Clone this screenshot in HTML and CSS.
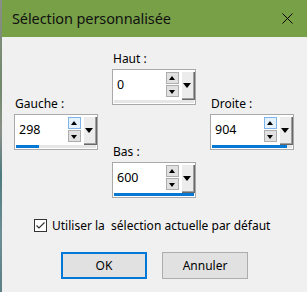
FILE: index.html
```html
<!DOCTYPE html>
<html lang="fr">
<head>
<meta charset="utf-8">
<title>Sélection personnalisée</title>
<link rel="stylesheet" href="styles.css">
</head>
<body>
<div class="desk">
  <div class="strip"></div>
  <div class="win">
    <div class="titlebar">
      <span class="title">Sélection personnalisée</span>
      <svg class="close" width="11" height="11" viewBox="0 0 11 11"><path d="M0.5 0.5 L10.5 10.5 M10.5 0.5 L0.5 10.5" stroke="#000" stroke-width="1" fill="none"/></svg>
    </div>
    <div class="body">
      <div class="fields">
        <div class="col side">
          <div class="field">
            <div class="label">Gauche :</div>
            <div class="box">
              <div class="row">
                <span class="value">298</span>
                <div class="spin"><span class="sb up hot"></span><span class="sb down"></span></div>
                <span class="drop"></span>
              </div>
              <div class="track"><div class="fill" style="width:29%"></div></div>
            </div>
          </div>
        </div>
        <div class="col mid">
          <div class="field">
            <div class="label">Haut :</div>
            <div class="box">
              <div class="row">
                <span class="value">0</span>
                <div class="spin"><span class="sb up"></span><span class="sb down"></span></div>
                <span class="drop"></span>
              </div>
              <div class="track"><div class="fill" style="width:0%"></div></div>
            </div>
          </div>
          <div class="field">
            <div class="label">Bas :</div>
            <div class="box">
              <div class="row">
                <span class="value">600</span>
                <div class="spin"><span class="sb up"></span><span class="sb down"></span></div>
                <span class="drop"></span>
              </div>
              <div class="track"><div class="fill" style="width:100%"></div></div>
            </div>
          </div>
        </div>
        <div class="col side">
          <div class="field">
            <div class="label">Droite :</div>
            <div class="box">
              <div class="row">
                <span class="value">904</span>
                <div class="spin"><span class="sb up hot"></span><span class="sb down"></span></div>
                <span class="drop"></span>
              </div>
              <div class="track"><div class="fill" style="width:94%"></div></div>
            </div>
          </div>
        </div>
      </div>
      <div class="check">
        <svg class="cbox" width="13" height="13" viewBox="0 0 13 13"><rect x="0.5" y="0.5" width="12" height="12" fill="#fff" stroke="#333"/><path d="M2.5 6.5 L5 9 L10.5 3.5" stroke="#333" stroke-width="1.2" fill="none"/></svg>
        <span class="ctext">Utiliser la&nbsp; sélection actuelle par défaut</span>
      </div>
      <div class="buttons">
        <button class="btn default">OK</button>
        <button class="btn">Annuler</button>
      </div>
    </div>
  </div>
</div>
</body>
</html>
```

FILE: styles.css
```css
* { box-sizing: border-box; }
html, body { margin: 0; padding: 0; }
body {
  font-family: "Noto Sans", "Open Sans", sans-serif;
  font-size: 12px;
  color: #000;
  background: #f0f0f0;
}
.desk { display: flex; width: 307px; height: 292px; overflow: hidden; }
.strip {
  width: 2px;
  flex: none;
  background: linear-gradient(to bottom, #8a8f86 0%, #6f8a6a 30%, #8c9088 45%, #4d7c80 60%, #6d8f96 80%, #5c7f86 100%);
}
.win { flex: 1; background: #f0f0f0; display: flex; flex-direction: column; }
.titlebar {
  height: 37px;
  background: #77a047;
  display: flex;
  align-items: center;
  justify-content: space-between;
  padding: 0 14px 0 10px;
}
.title { font-size: 14.5px; color: #111; letter-spacing: -0.1px; padding-bottom: 1px; }
.close { display: block; }
.body { padding: 14px 0 0 12px; display: flex; flex-direction: column; }
.fields { display: flex; gap: 14px; align-items: flex-start; }
.col { width: 84px; display: flex; flex-direction: column; gap: 39px; }
.side { padding-top: 45px; }
.label { height: 16px; line-height: 16px; margin-bottom: 2px; padding-left: 1px; }
.box {
  width: 84px;
  height: 36px;
  border: 1px solid #a9a9a9;
  background: #fff;
  display: flex;
  flex-direction: column;
}
.row { height: 30px; display: flex; gap: 2px; }
.value { flex: 1; line-height: 30px; padding-left: 4px; font-size: 12.5px; }
.spin { width: 13px; padding-top: 2px; display: flex; flex-direction: column; gap: 1px; }
.sb {
  position: relative;
  height: 12px;
  border: 1px solid #adadad;
  background: #e1e1e1;
}
.sb.hot { border-color: #7eb4ea; background: #e5f1fb; }
.sb::after {
  content: "";
  position: absolute;
  left: 2px;
  width: 0; height: 0;
  border-left: 3.5px solid transparent;
  border-right: 3.5px solid transparent;
}
.up::after { top: 3px; border-bottom: 4px solid #000; }
.down::after { top: 4px; border-top: 4px solid #000; }
.drop {
  position: relative;
  width: 14px;
  height: 29px;
  margin-top: 1px;
  background: #ececec;
  box-shadow: inset 1px 1px 0 #fff, inset -1px -1px 0 #696969, inset -2px -2px 0 #a0a0a0;
}
.drop::after {
  content: "";
  position: absolute;
  left: 2px;
  top: 12px;
  width: 0; height: 0;
  border-left: 4.5px solid transparent;
  border-right: 4.5px solid transparent;
  border-top: 5px solid #000;
}
.track { height: 3px; margin: 0 1px; background: #e6e6e6; }
.fill { height: 100%; background: #0678d4; }
.check { display: flex; align-items: center; gap: 5px; margin-top: 21px; padding-left: 20px; height: 13px; }
.cbox { display: block; flex: none; }
.ctext { line-height: 16px; white-space: nowrap; }
.buttons { display: flex; justify-content: center; gap: 15px; margin-top: 20px; padding-right: 12px; }
.btn {
  width: 86px;
  height: 27px;
  border: 1px solid #adadad;
  background: #e1e1e1;
  font-family: inherit;
  font-size: 12px;
  color: #000;
  padding: 0;
}
.btn.default { border: 2px solid #0078d7; }
```
